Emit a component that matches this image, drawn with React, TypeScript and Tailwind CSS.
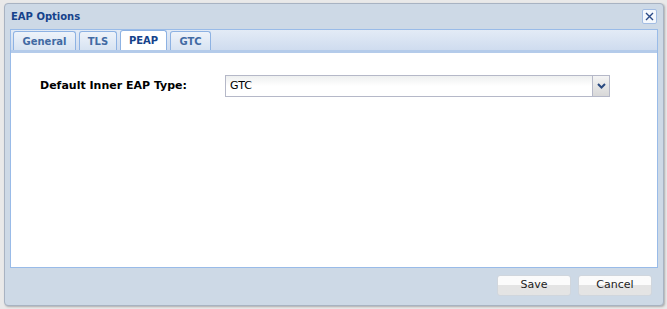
import React from "react";

const tabs = [
	{ label: "General", w: "w-[63px]" },
	{ label: "TLS", w: "w-[38px]" },
	{ label: "PEAP", w: "w-[47px]" },
	{ label: "GTC", w: "w-[41px]" },
];

function App() {
	return (
		<div className="w-[667px] h-[309px] bg-[#e9e9e9] p-[3px_3px_3px_4px] font-['DejaVu_Sans',sans-serif]">
			<div className="h-full flex flex-col rounded-[4px] border border-[#a8b3c2] bg-[#cdd9e6] shadow-[1px_1px_2px_rgba(0,0,0,0.25)] px-[5px]">
				{/* Header */}
				<div className="h-[25px] flex items-center justify-between pl-[1px] pr-[1px]">
					<span className="text-[10px] font-bold text-[#15428b]">EAP Options</span>
					<button className="w-[15px] h-[15px] rounded-[2px] border border-[#a3bde3] bg-[#f4f8fd] flex items-center justify-center">
						<svg width="9" height="9" viewBox="0 0 9 9">
							<path d="M1 1L8 8M8 1L1 8" stroke="#2b4a86" strokeWidth="1.4" />
						</svg>
					</button>
				</div>

				{/* Tab panel */}
				<div className="flex flex-col h-[239px] border border-[#99bbe8] bg-white">
					<div className="h-[23px] flex items-end gap-[3px] pl-[2px] bg-gradient-to-b from-[#e3ebf6] to-[#cfdcef] border-b-[3px] border-b-[#b4cbea]">
						{tabs.map((t) => (
							<div
								key={t.label}
								className={`${t.w} flex items-center justify-center rounded-t-[3px] border border-b-0 text-[10px] font-bold ${
									t.label === "PEAP"
										? "bg-white border-[#8db2e3] text-[#15428b] h-[20px]"
										: "bg-gradient-to-b from-[#eef3fa] to-[#d7e3f2] border-[#8db2e3] text-[#416aa3] h-[19px]"
								}`}
							>
								{t.label}
							</div>
						))}
					</div>
					<div className="flex-1 pt-[22px] pl-[29px]">
						<div className="flex items-center">
							<label className="w-[185px] shrink-0 text-[11px] font-bold text-black">
								Default Inner EAP Type:
							</label>
							<div className="w-[385px] h-[22px] flex border border-[#b5b8c8] bg-gradient-to-b from-[#eef0f0] to-white via-white">
								<span className="flex-1 flex items-center pl-[4px] text-[11px] text-black">GTC</span>
								<div className="w-[17px] h-full flex items-center justify-center border-l border-[#b5b8c8] bg-gradient-to-b from-[#f4f4f4] to-[#d8d8d8]">
									<svg width="9" height="6" viewBox="0 0 9 6">
										<path d="M1 1L4.5 4.5L8 1" stroke="#2a4a80" strokeWidth="2" fill="none" />
									</svg>
								</div>
							</div>
						</div>
					</div>
				</div>

				{/* Footer */}
				<div className="flex-1 flex items-start pt-[7px] justify-end gap-[7px] pr-[6px]">
					{["Save", "Cancel"].map((b) => (
						<button
							key={b}
							className="w-[74px] h-[21px] rounded-[3px] border border-[#d0d6dd] bg-gradient-to-b from-[#fbfbfb] from-50% to-[#e4e4e4] to-50% text-[11px] text-[#222]"
						>
							{b}
						</button>
					))}
				</div>
			</div>
		</div>
	);
}

export default App;
